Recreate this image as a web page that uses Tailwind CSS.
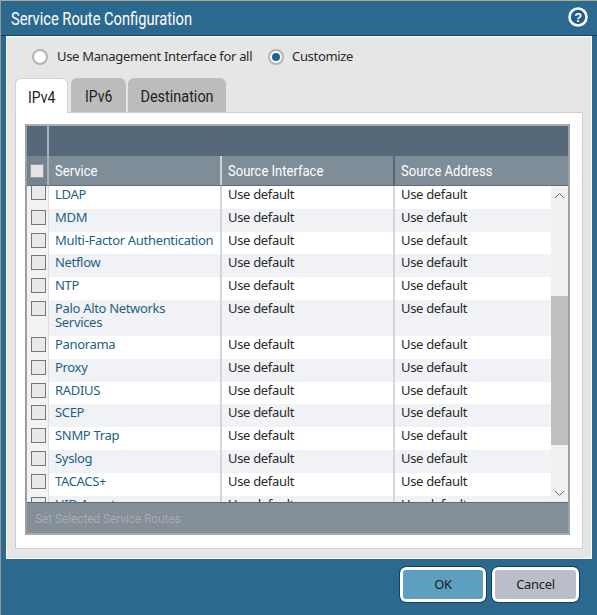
<!DOCTYPE html>
<html lang="en">
<head>
  <meta charset="UTF-8">
  <title>Service Route Configuration</title>
  <script src="https://cdn.jsdelivr.net/npm/@tailwindcss/browser@4"></script>
</head>
<body class="m-0 bg-[#2b6a8e]">
  <div class="w-[597px] h-[615px] flex flex-col overflow-hidden bg-[#2b6a8e] border-t border-t-[#b5a88f] border-l border-l-[#9a9a98] font-['Noto_Sans',sans-serif] tracking-[-0.32px] text-[#2a2a2a]">
    <!-- title bar -->
    <div class="h-[35px] shrink-0 flex items-center justify-between pl-[10px] pr-[9px] border-b border-[#123f63]">
      <h1 class="font-['Roboto',sans-serif] text-[18px] font-normal tracking-normal text-white whitespace-nowrap origin-left scale-x-[0.815]">Service Route Configuration</h1>
      <svg class="-mt-[2px]" width="20" height="20" viewBox="0 0 20 20">
        <circle cx="10" cy="10" r="8.5" fill="#1f5f8f" stroke="#ffffff" stroke-width="2.6"/>
        <text x="10" y="14.5" text-anchor="middle" font-family="Liberation Sans" font-weight="700" font-size="13" fill="#ffffff">?</text>
      </svg>
    </div>
    <!-- dialog body -->
    <div class="ml-[5px] w-[586px] h-[523px] shrink-0 bg-[#e6e6e6] border border-white flex flex-col">
      <div class="h-[39px] shrink-0 flex items-center pl-[25px] text-[13px]">
        <span class="w-[16px] h-[16px] rounded-full bg-white border-2 border-[#b4b4b4]"></span>
        <span class="ml-[9px] w-[195px] whitespace-nowrap">Use Management Interface for all</span>
        <span class="ml-[16px] w-[16px] h-[16px] rounded-full bg-white border-2 border-[#b4b4b4] flex items-center justify-center"><span class="w-[8px] h-[8px] rounded-full bg-[#1e6395]"></span></span>
        <span class="ml-[8px]">Customize</span>
      </div>
      <div class="flex items-end h-[36px] shrink-0 pl-[8px] font-['Roboto',sans-serif] text-[17px] tracking-normal text-[#222]">
        <div class="w-[53px] h-[35px] -mb-px z-10 bg-white rounded-t-[6px] border border-[#d4d4d4] border-b-0 flex items-center justify-center pt-[3px]"><span class="scale-x-[0.82]">IPv4</span></div>
        <div class="ml-[3px] w-[55px] h-[34px] bg-[#bcbcbc] rounded-t-[6px] flex items-center justify-center pt-[3px]"><span class="scale-x-[0.82]">IPv6</span></div>
        <div class="ml-[2px] w-[98px] h-[34px] bg-[#bcbcbc] rounded-t-[6px] flex items-center justify-center pt-[3px]"><span class="scale-x-[0.85]">Destination</span></div>
      </div>
      <div class="mx-[8px] w-[568px] h-[437px] bg-white border border-[#cfcfcf] pt-[11px] pl-[9px]">
        <div class="w-[545px] h-[411px] flex flex-col border-2 border-[#a8adb2] border-r-[#9da3a8] border-l-[#9aa0a6] bg-white">
          <!-- header -->
          <div class="h-[30px] shrink-0 flex bg-[#56697a]">
            <div class="w-[22px] border-r-2 border-[#a9b2ba]"></div>
          </div>
          <div class="h-[30px] shrink-0 flex bg-[#7f8d99] text-white text-[14px] tracking-normal font-['Roboto',sans-serif] border-b border-[#5f6e7b]">
            <div class="w-[22px] shrink-0 border-r-2 border-[#a9b2ba] flex items-center justify-center bg-[#75838f]"><span class="block w-[14px] h-[14px] bg-[#e4e4e4] border border-[#999]"></span></div>
            <div class="w-[173px] shrink-0 pl-[6px] pt-[1px] flex items-center border-r-2 border-[#d0d5da]"><span class="origin-left scale-x-[0.93] whitespace-nowrap">Service</span></div>
            <div class="w-[173px] shrink-0 pl-[6px] pt-[1px] flex items-center border-r-2 border-[#56697a]"><span class="origin-left scale-x-[0.93] whitespace-nowrap">Source Interface</span></div>
            <div class="flex-1 pl-[6px] pt-[1px] flex items-center"><span class="origin-left scale-x-[0.93] whitespace-nowrap">Source Address</span></div>
          </div>
          <!-- rows -->
          <div class="flex-1 min-h-0 flex overflow-hidden text-[13px] leading-[14px]">
            <div class="w-[524px] shrink-0">
              <div class="flex h-[22.8px] bg-white">
                <div class="w-[22px] shrink-0 bg-[#f3f3f1] border-r border-[#dddddd] pl-[4px]"><span class="block w-[15px] h-[15px] -mt-[1px] bg-[#e9e9e9] border border-[#777]"></span></div>
                <div class="w-[173px] shrink-0 pl-[6px] pt-[1px] text-[#1d6282] border-r-2 border-[#d4d6da]">LDAP</div>
                <div class="w-[173px] shrink-0 pl-[6px] pt-[1px] border-r-2 border-[#d4d6da]">Use default</div>
                <div class="flex-1 pl-[6px] pt-[1px]">Use default</div>
              </div>
              <div class="flex h-[22.8px] bg-[#f0f2f6]">
                <div class="w-[22px] shrink-0 bg-[#f3f3f1] border-r border-[#dddddd] pl-[4px] pt-[1px]"><span class="block w-[15px] h-[15px] bg-[#e9e9e9] border border-[#777]"></span></div>
                <div class="w-[173px] shrink-0 pl-[6px] pt-[1px] text-[#1d6282] border-r-2 border-[#d4d6da]">MDM</div>
                <div class="w-[173px] shrink-0 pl-[6px] pt-[1px] border-r-2 border-[#d4d6da]">Use default</div>
                <div class="flex-1 pl-[6px] pt-[1px]">Use default</div>
              </div>
              <div class="flex h-[22.8px] bg-white">
                <div class="w-[22px] shrink-0 bg-[#f3f3f1] border-r border-[#dddddd] pl-[4px] pt-[1px]"><span class="block w-[15px] h-[15px] bg-[#e9e9e9] border border-[#777]"></span></div>
                <div class="w-[173px] shrink-0 pl-[6px] pt-[1px] text-[#1d6282] border-r-2 border-[#d4d6da] whitespace-nowrap">Multi-Factor Authentication</div>
                <div class="w-[173px] shrink-0 pl-[6px] pt-[1px] border-r-2 border-[#d4d6da]">Use default</div>
                <div class="flex-1 pl-[6px] pt-[1px]">Use default</div>
              </div>
              <div class="flex h-[22.8px] bg-[#f0f2f6]">
                <div class="w-[22px] shrink-0 bg-[#f3f3f1] border-r border-[#dddddd] pl-[4px] pt-[1px]"><span class="block w-[15px] h-[15px] bg-[#e9e9e9] border border-[#777]"></span></div>
                <div class="w-[173px] shrink-0 pl-[6px] pt-[1px] text-[#1d6282] border-r-2 border-[#d4d6da]">Netflow</div>
                <div class="w-[173px] shrink-0 pl-[6px] pt-[1px] border-r-2 border-[#d4d6da]">Use default</div>
                <div class="flex-1 pl-[6px] pt-[1px]">Use default</div>
              </div>
              <div class="flex h-[22.8px] bg-white">
                <div class="w-[22px] shrink-0 bg-[#f3f3f1] border-r border-[#dddddd] pl-[4px] pt-[1px]"><span class="block w-[15px] h-[15px] bg-[#e9e9e9] border border-[#777]"></span></div>
                <div class="w-[173px] shrink-0 pl-[6px] pt-[1px] text-[#1d6282] border-r-2 border-[#d4d6da]">NTP</div>
                <div class="w-[173px] shrink-0 pl-[6px] pt-[1px] border-r-2 border-[#d4d6da]">Use default</div>
                <div class="flex-1 pl-[6px] pt-[1px]">Use default</div>
              </div>
              <div class="flex h-[36px] bg-[#f0f2f6]">
                <div class="w-[22px] shrink-0 bg-[#f3f3f1] border-r border-[#dddddd] pl-[4px] pt-[1px]"><span class="block w-[15px] h-[15px] bg-[#e9e9e9] border border-[#777]"></span></div>
                <div class="w-[173px] shrink-0 pl-[6px] pt-[1px] text-[#1d6282] border-r-2 border-[#d4d6da]">Palo Alto Networks<br>Services</div>
                <div class="w-[173px] shrink-0 pl-[6px] pt-[1px] border-r-2 border-[#d4d6da]">Use default</div>
                <div class="flex-1 pl-[6px] pt-[1px]">Use default</div>
              </div>
              <div class="flex h-[22.8px] bg-white">
                <div class="w-[22px] shrink-0 bg-[#f3f3f1] border-r border-[#dddddd] pl-[4px] pt-[1px]"><span class="block w-[15px] h-[15px] bg-[#e9e9e9] border border-[#777]"></span></div>
                <div class="w-[173px] shrink-0 pl-[6px] pt-[1px] text-[#1d6282] border-r-2 border-[#d4d6da]">Panorama</div>
                <div class="w-[173px] shrink-0 pl-[6px] pt-[1px] border-r-2 border-[#d4d6da]">Use default</div>
                <div class="flex-1 pl-[6px] pt-[1px]">Use default</div>
              </div>
              <div class="flex h-[22.8px] bg-[#f0f2f6]">
                <div class="w-[22px] shrink-0 bg-[#f3f3f1] border-r border-[#dddddd] pl-[4px] pt-[1px]"><span class="block w-[15px] h-[15px] bg-[#e9e9e9] border border-[#777]"></span></div>
                <div class="w-[173px] shrink-0 pl-[6px] pt-[1px] text-[#1d6282] border-r-2 border-[#d4d6da]">Proxy</div>
                <div class="w-[173px] shrink-0 pl-[6px] pt-[1px] border-r-2 border-[#d4d6da]">Use default</div>
                <div class="flex-1 pl-[6px] pt-[1px]">Use default</div>
              </div>
              <div class="flex h-[22.8px] bg-white">
                <div class="w-[22px] shrink-0 bg-[#f3f3f1] border-r border-[#dddddd] pl-[4px] pt-[1px]"><span class="block w-[15px] h-[15px] bg-[#e9e9e9] border border-[#777]"></span></div>
                <div class="w-[173px] shrink-0 pl-[6px] pt-[1px] text-[#1d6282] border-r-2 border-[#d4d6da]">RADIUS</div>
                <div class="w-[173px] shrink-0 pl-[6px] pt-[1px] border-r-2 border-[#d4d6da]">Use default</div>
                <div class="flex-1 pl-[6px] pt-[1px]">Use default</div>
              </div>
              <div class="flex h-[22.8px] bg-[#f0f2f6]">
                <div class="w-[22px] shrink-0 bg-[#f3f3f1] border-r border-[#dddddd] pl-[4px] pt-[1px]"><span class="block w-[15px] h-[15px] bg-[#e9e9e9] border border-[#777]"></span></div>
                <div class="w-[173px] shrink-0 pl-[6px] pt-[1px] text-[#1d6282] border-r-2 border-[#d4d6da]">SCEP</div>
                <div class="w-[173px] shrink-0 pl-[6px] pt-[1px] border-r-2 border-[#d4d6da]">Use default</div>
                <div class="flex-1 pl-[6px] pt-[1px]">Use default</div>
              </div>
              <div class="flex h-[22.8px] bg-white">
                <div class="w-[22px] shrink-0 bg-[#f3f3f1] border-r border-[#dddddd] pl-[4px] pt-[1px]"><span class="block w-[15px] h-[15px] bg-[#e9e9e9] border border-[#777]"></span></div>
                <div class="w-[173px] shrink-0 pl-[6px] pt-[1px] text-[#1d6282] border-r-2 border-[#d4d6da]">SNMP Trap</div>
                <div class="w-[173px] shrink-0 pl-[6px] pt-[1px] border-r-2 border-[#d4d6da]">Use default</div>
                <div class="flex-1 pl-[6px] pt-[1px]">Use default</div>
              </div>
              <div class="flex h-[22.8px] bg-[#f0f2f6]">
                <div class="w-[22px] shrink-0 bg-[#f3f3f1] border-r border-[#dddddd] pl-[4px] pt-[1px]"><span class="block w-[15px] h-[15px] bg-[#e9e9e9] border border-[#777]"></span></div>
                <div class="w-[173px] shrink-0 pl-[6px] pt-[1px] text-[#1d6282] border-r-2 border-[#d4d6da]">Syslog</div>
                <div class="w-[173px] shrink-0 pl-[6px] pt-[1px] border-r-2 border-[#d4d6da]">Use default</div>
                <div class="flex-1 pl-[6px] pt-[1px]">Use default</div>
              </div>
              <div class="flex h-[22.8px] bg-white">
                <div class="w-[22px] shrink-0 bg-[#f3f3f1] border-r border-[#dddddd] pl-[4px] pt-[1px]"><span class="block w-[15px] h-[15px] bg-[#e9e9e9] border border-[#777]"></span></div>
                <div class="w-[173px] shrink-0 pl-[6px] pt-[1px] text-[#1d6282] border-r-2 border-[#d4d6da]">TACACS+</div>
                <div class="w-[173px] shrink-0 pl-[6px] pt-[1px] border-r-2 border-[#d4d6da]">Use default</div>
                <div class="flex-1 pl-[6px] pt-[1px]">Use default</div>
              </div>
              <div class="flex h-[22.8px] bg-[#f0f2f6]">
                <div class="w-[22px] shrink-0 bg-[#f3f3f1] border-r border-[#dddddd] pl-[4px] pt-[1px]"><span class="block w-[15px] h-[15px] bg-[#e9e9e9] border border-[#777]"></span></div>
                <div class="w-[173px] shrink-0 pl-[6px] pt-[1px] text-[#1d6282] border-r-2 border-[#d4d6da]">UID Agent</div>
                <div class="w-[173px] shrink-0 pl-[6px] pt-[1px] border-r-2 border-[#d4d6da]">Use default</div>
                <div class="flex-1 pl-[6px] pt-[1px]">Use default</div>
              </div>
            </div>
            <!-- scrollbar -->
            <div class="flex-1 flex flex-col bg-[#f0f0f0]">
              <div class="h-[19px] shrink-0 flex items-center justify-center"><svg width="11" height="7" viewBox="0 0 11 7" fill="none" stroke="#666" stroke-width="1"><path d="M1 6 L5.5 1.5 L10 6"/></svg></div>
              <div class="h-[91px] shrink-0"></div>
              <div class="h-[149px] shrink-0 bg-[#bfbfbf]"></div>
              <div class="flex-1 flex items-end justify-center pb-[5px]"><svg width="11" height="7" viewBox="0 0 11 7" fill="none" stroke="#666" stroke-width="1"><path d="M1 1 L5.5 5.5 L10 1"/></svg></div>
            </div>
          </div>
          <!-- footer -->
          <div class="h-[31px] shrink-0 bg-[#858f97] border-t border-[#5d6a75] flex items-center pl-[8px] font-['Roboto',sans-serif] text-[13.5px] tracking-normal text-[#a5acb2]"><span class="origin-left scale-x-[0.87] whitespace-nowrap">Set Selected Service Routes</span></div>
        </div>
      </div>
    </div>
    <!-- buttons -->
    <div class="flex-1 flex items-start justify-end pt-[8px] pr-[18px] gap-[6px] text-[13px]">
      <button class="w-[86px] h-[35px] rounded-[6px] bg-[#5c9fc0] border-[3px] border-white outline outline-1 outline-[#123f63] text-[#1c1c1c]">OK</button>
      <button class="w-[87px] h-[35px] rounded-[6px] bg-[#bbbec9] border-[3px] border-white outline outline-1 outline-[#123f63] text-[#1c1c1c]">Cancel</button>
    </div>
  </div>
</body>
</html>
